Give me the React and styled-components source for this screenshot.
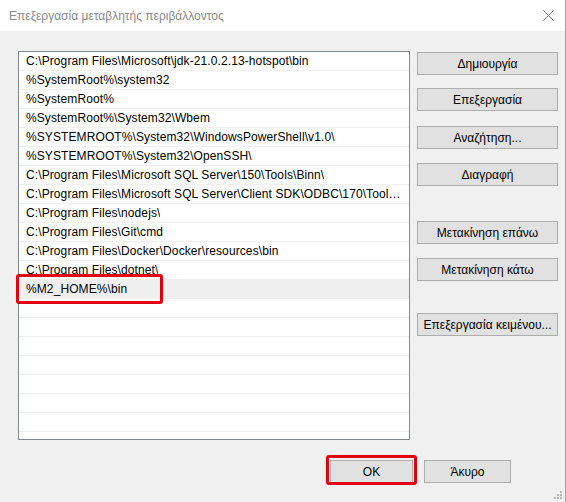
import React from "react";
import styled, { createGlobalStyle } from "styled-components";

const GlobalStyle = createGlobalStyle`
  body {
    margin: 0;
    font-family: "Liberation Sans", Arial, sans-serif;
    font-size: 12px;
    background: #f0f0f0;
  }
`;

const Window = styled.div`
  position: relative;
  width: 566px;
  height: 502px;
  box-sizing: border-box;
  background: #f0f0f0;
  border-right: 1px solid #a0a0a0;
  display: flex;
  flex-direction: column;
`;

const TitleBar = styled.div`
  height: 31px;
  flex-shrink: 0;
  background: #ffffff;
  display: flex;
  align-items: center;
  justify-content: space-between;
  padding: 0 11px 0 9px;
`;

const Title = styled.span`
  color: #8a8a8a;
  font-size: 12px;
`;

const Content = styled.div`
  display: flex;
  gap: 7px;
  padding: 20px 0 0 18px;
`;

const List = styled.div`
  position: relative;
  width: 392px;
  height: 389px;
  box-sizing: border-box;
  border: 1px solid #828790;
  background: #ffffff;
`;

const Rows = styled.div`
  height: 100%;
  overflow: hidden;
`;

const Row = styled.div`
  height: 19px;
  box-sizing: border-box;
  border-bottom: 1px solid #efefef;
  padding: 0 4px 0 7px;
  display: flex;
  align-items: center;
  background: ${(props) => (props.selected ? "#efefef" : "#ffffff")};
  color: #000;
  letter-spacing: 0.1px;

  span {
    white-space: nowrap;
    overflow: hidden;
    text-overflow: ellipsis;
  }
`;

const Marker = styled.div`
  position: absolute;
  left: -3px;
  top: 222px;
  width: 147px;
  height: 30px;
  box-sizing: border-box;
  border: 3px solid #e0000f;
  border-radius: 3px;
  pointer-events: none;
`;

const ButtonColumn = styled.div`
  display: flex;
  flex-direction: column;
  width: 141px;
  padding-top: 1px;
`;

const Button = styled.button`
  height: 23px;
  width: ${(props) => props.width || "100%"};
  margin-top: ${(props) => props.offset || 0}px;
  box-sizing: border-box;
  border: 1px solid #adadad;
  background: #e1e1e1;
  color: #000;
  font-family: inherit;
  font-size: 12px;
  padding: 0;
`;

const Footer = styled.div`
  display: flex;
  justify-content: flex-end;
  gap: 11px;
  padding: 20px 54px 0 0;
`;

const Highlight = styled.div`
  position: relative;

  &::after {
    content: "";
    position: absolute;
    top: -5px;
    left: -4px;
    right: -4px;
    bottom: -2px;
    border: 3px solid #e0000f;
    border-radius: 3px;
  }
`;

const Grip = styled.svg`
  position: absolute;
  right: 2px;
  bottom: 2px;
`;

const paths = [
  "C:\\Program Files\\Microsoft\\jdk-21.0.2.13-hotspot\\bin",
  "%SystemRoot%\\system32",
  "%SystemRoot%",
  "%SystemRoot%\\System32\\Wbem",
  "%SYSTEMROOT%\\System32\\WindowsPowerShell\\v1.0\\",
  "%SYSTEMROOT%\\System32\\OpenSSH\\",
  "C:\\Program Files\\Microsoft SQL Server\\150\\Tools\\Binn\\",
  "C:\\Program Files\\Microsoft SQL Server\\Client SDK\\ODBC\\170\\Tools\\Binn\\",
  "C:\\Program Files\\nodejs\\",
  "C:\\Program Files\\Git\\cmd",
  "C:\\Program Files\\Docker\\Docker\\resources\\bin",
  "C:\\Program Files\\dotnet\\",
  "%M2_HOME%\\bin",
];

const rows = [...paths, ...Array(9).fill("")];

const buttons = [
  { label: "Δημιουργία", offset: 0 },
  { label: "Επεξεργασία", offset: 13 },
  { label: "Αναζήτηση...", offset: 15 },
  { label: "Διαγραφή", offset: 14 },
  { label: "Μετακίνηση επάνω", offset: 35 },
  { label: "Μετακίνηση κάτω", offset: 14 },
  { label: "Επεξεργασία κειμένου...", offset: 32 },
];

const App = () => {
  return (
    <Window>
      <GlobalStyle />
      <TitleBar>
        <Title>Επεξεργασία μεταβλητής περιβάλλοντος</Title>
        <svg width="11" height="11" viewBox="0 0 11 11">
          <path d="M0.5 0.5 L10.5 10.5 M10.5 0.5 L0.5 10.5" stroke="#7a7a7a" strokeWidth="1" fill="none" />
        </svg>
      </TitleBar>
      <Content>
        <List>
          <Rows>
            {rows.map((text, i) => (
              <Row key={i} selected={i === 12}>
                <span>{text}</span>
              </Row>
            ))}
          </Rows>
          <Marker />
        </List>
        <ButtonColumn>
          {buttons.map((b) => (
            <Button key={b.label} offset={b.offset}>
              {b.label}
            </Button>
          ))}
        </ButtonColumn>
      </Content>
      <Footer>
        <Highlight>
          <Button width="83px">OK</Button>
        </Highlight>
        <Button width="87px">Άκυρο</Button>
      </Footer>
      <Grip width="10" height="10" viewBox="0 0 10 10">
        <g fill="#b4b4b4">
          <rect x="7" y="1" width="2" height="2" />
          <rect x="4" y="4" width="2" height="2" />
          <rect x="7" y="4" width="2" height="2" />
          <rect x="1" y="7" width="2" height="2" />
          <rect x="4" y="7" width="2" height="2" />
          <rect x="7" y="7" width="2" height="2" />
        </g>
      </Grip>
    </Window>
  );
};

export default App;
